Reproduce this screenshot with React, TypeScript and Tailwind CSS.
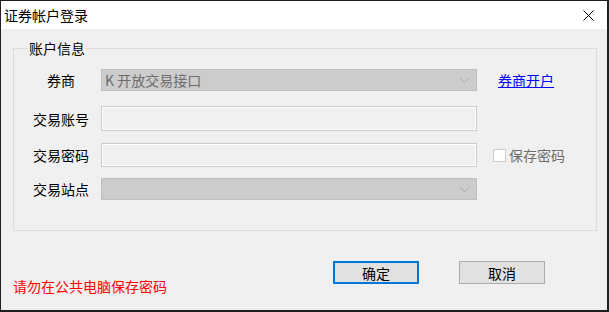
const font = { fontFamily: '"Noto Sans CJK SC", "Microsoft YaHei", sans-serif' };

function Chevron() {
  return (
    <svg width="9" height="5" viewBox="0 0 9 5" className="shrink-0">
      <path d="M0.5 0.5 L4.5 4.5 L8.5 0.5" fill="none" stroke="#a6a6a6" strokeWidth="1" />
    </svg>
  );
}

function Combo({ text }: { text?: string }) {
  return (
    <div className="flex h-[22px] w-[376px] items-center justify-between border border-[#bfbfbf] bg-[#cccccc] pl-[3px] pr-[7px]">
      <span className="text-[14px] leading-[14px] text-[#6d6d6d]">{text}</span>
      <Chevron />
    </div>
  );
}

function TextBox({ h }: { h: string }) {
  return <div className={`w-[376px] border border-[#cccccc] bg-[#f0f0f0] shadow-[inset_0_0_0_1px_#ffffff] ${h}`} />;
}

function Label({ children }: { children: React.ReactNode }) {
  return <div className="w-[80px] text-center text-[14px] leading-[14px] text-black">{children}</div>;
}

export default function App() {
  return (
    <div className="h-[312px] w-[609px] bg-[#1f1f1f] pl-px pt-px" style={font}>
      <div className="flex h-[309px] w-[606px] flex-col bg-[#f0f0f0]">
        {/* title bar */}
        <div className="flex h-[28px] items-center justify-between bg-white pl-[3px] pr-[13px]">
          <span className="text-[14px] leading-[14px] text-black">证券帐户登录</span>
          <svg width="11" height="11" viewBox="0 0 11 11">
            <path d="M0.5 0.5 L10.5 10.5 M10.5 0.5 L0.5 10.5" stroke="#000" strokeWidth="1" />
          </svg>
        </div>

        <fieldset className="ml-[12px] mt-[12px] w-[584px] border border-[#dcdcdc] pb-[30px] pl-[7px] pt-[14px]">
          <legend className="ml-[7px] px-px text-[14px] leading-[14px] text-black">账户信息</legend>

          <div className="flex h-[22px] items-center">
            <Label>券商</Label>
            <Combo text="K 开放交易接口" />
            <a className="ml-[21px] text-[14px] leading-[14px] text-[#0000ff] underline">券商开户</a>
          </div>

          <div className="mt-[15px] flex h-[25px] items-center">
            <Label>交易账号</Label>
            <TextBox h="h-[25px]" />
          </div>

          <div className="mt-[12px] flex h-[24px] items-center">
            <Label>交易密码</Label>
            <TextBox h="h-[24px]" />
            <div className="ml-[16px] flex items-center">
              <div className="h-[13px] w-[13px] border border-[#cccccc] bg-white" />
              <span className="ml-[3px] text-[14px] leading-[14px] text-[#6d6d6d]">保存密码</span>
            </div>
          </div>

          <div className="mt-[11px] flex h-[22px] items-center">
            <Label>交易站点</Label>
            <Combo />
          </div>
        </fieldset>

        <div className="flex items-start">
          <div className="mt-[48px] w-[332px] pl-[12px] text-[14px] leading-[14px] text-[#ff0000]">请勿在公共电脑保存密码</div>
          <button className="mt-[30px] flex h-[23px] w-[86px] items-center justify-center border-2 border-[#0078d7] bg-[#e1e1e1] text-[14px] leading-[14px] text-black">
            确定
          </button>
          <button className="ml-[40px] mt-[30px] flex h-[23px] w-[86px] items-center justify-center border border-[#adadad] bg-[#e1e1e1] text-[14px] leading-[14px] text-black">
            取消
          </button>
        </div>
      </div>
    </div>
  );
}
